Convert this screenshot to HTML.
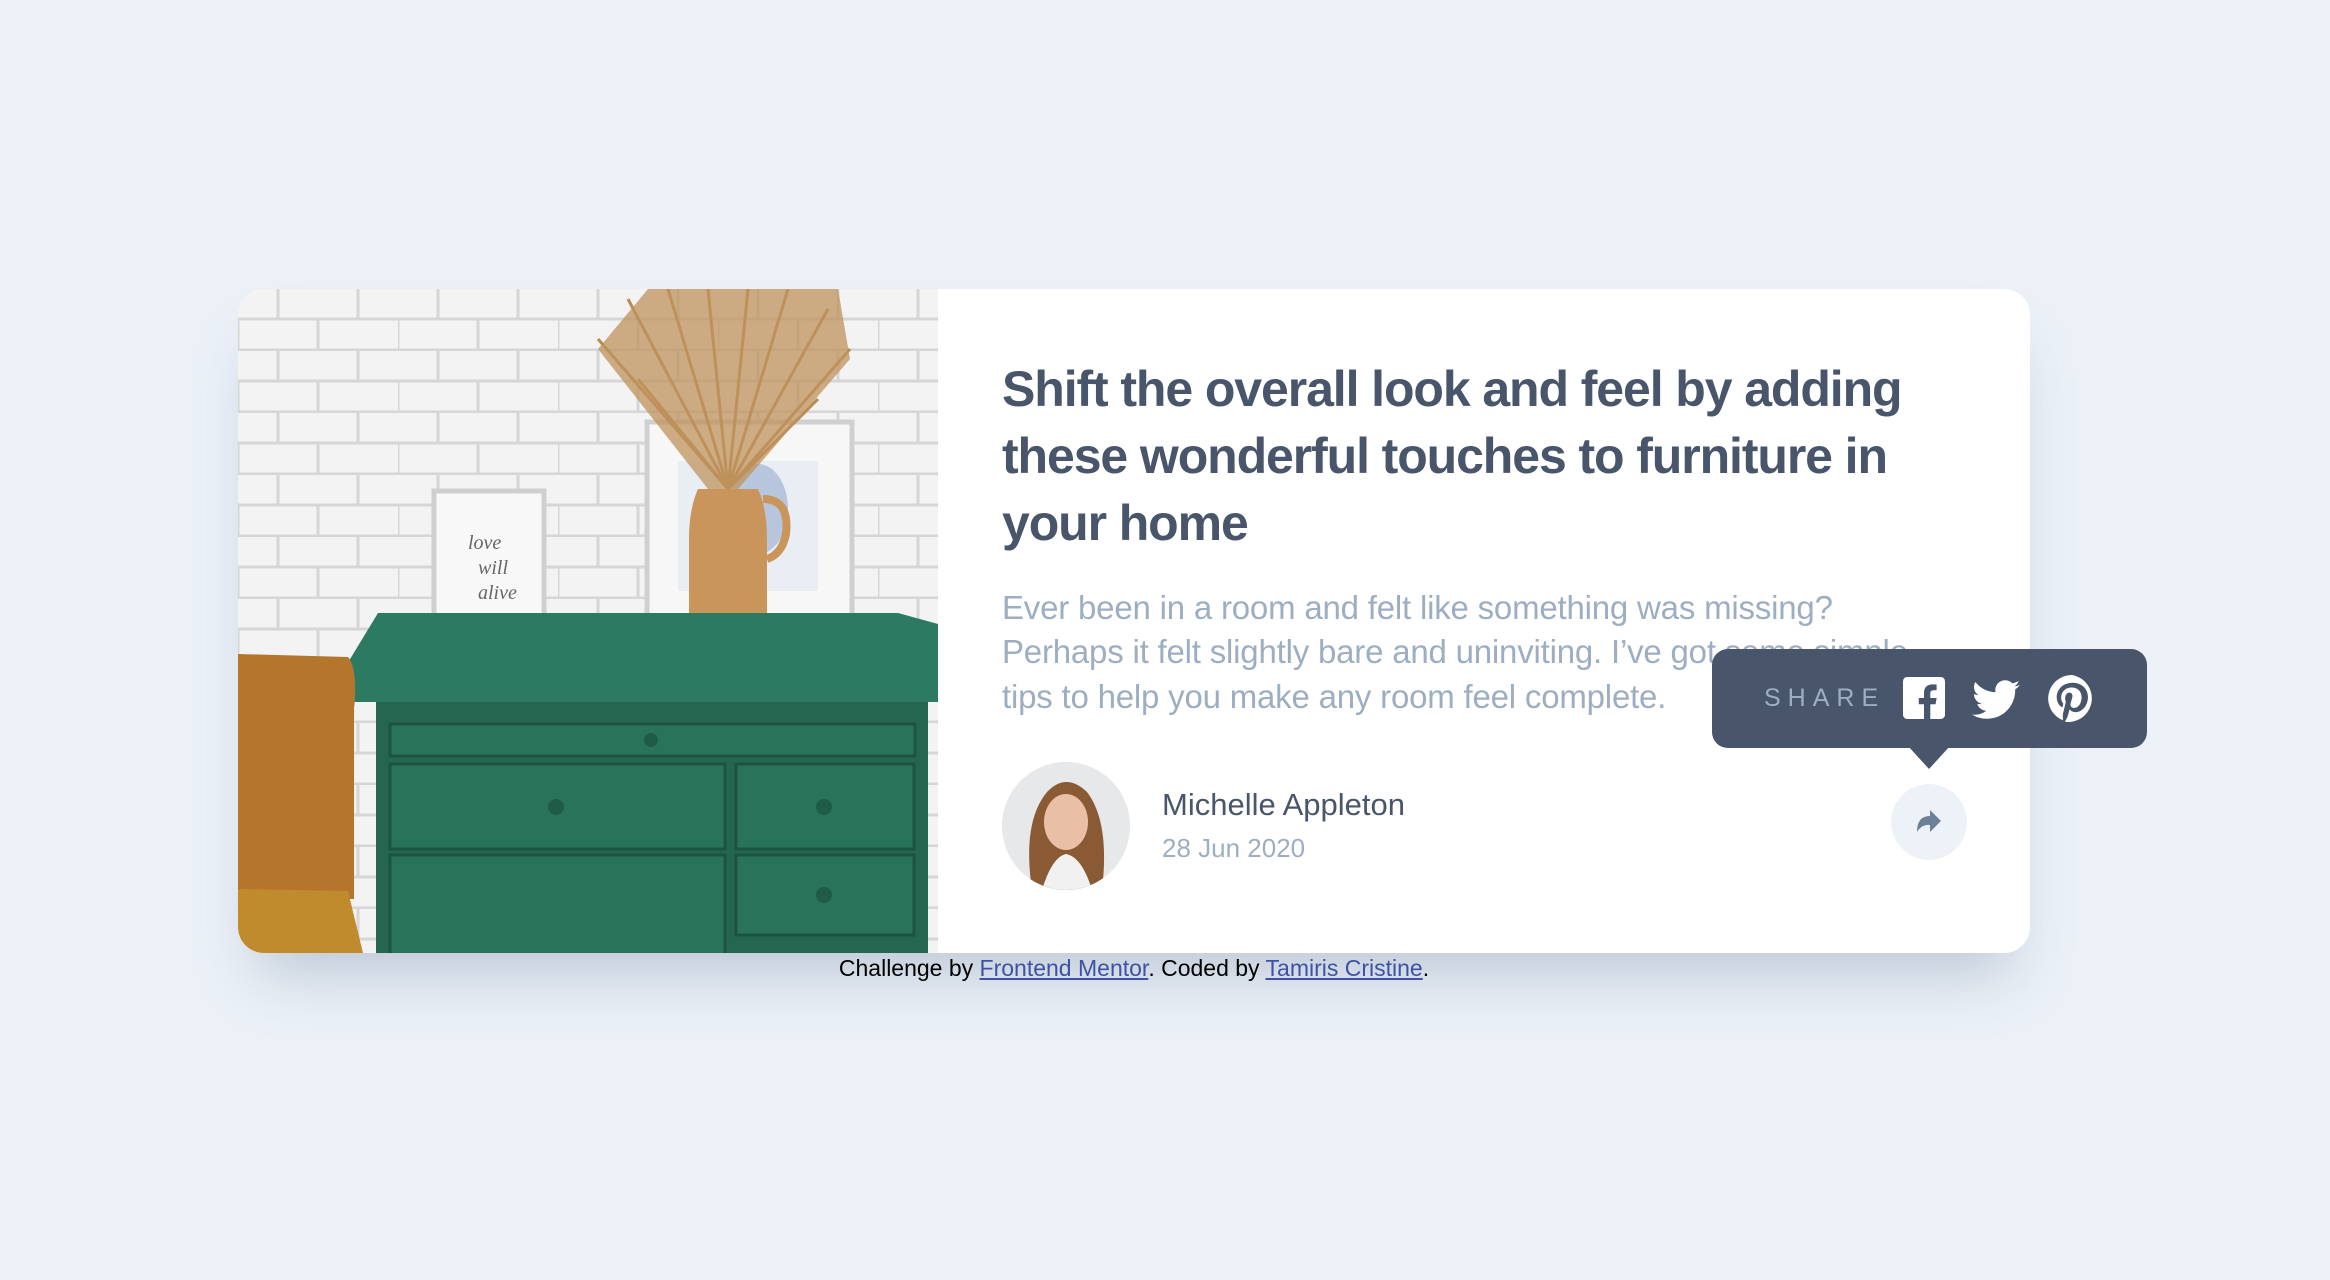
<!DOCTYPE html>
<html><head><meta charset="utf-8"><style>
*{margin:0;padding:0;box-sizing:border-box}
html,body{width:2330px;height:1280px;background:#ecf1f8;font-family:"Liberation Sans",sans-serif;overflow:hidden;position:relative}
.card{position:absolute;left:238px;top:289px;width:1792px;height:664px;background:#fff;border-radius:26px;overflow:hidden;box-shadow:0 40px 60px -20px rgba(100,120,150,.35)}
.img{position:absolute;left:0;top:0;width:700px;height:664px}
.t{position:absolute;left:1002px;color:#48556a;font-weight:bold;font-size:50px;letter-spacing:-1.1px;white-space:nowrap}
.d{position:absolute;left:1002px;color:#9daec2;font-size:33px;letter-spacing:-0.2px;white-space:nowrap}
.av{position:absolute;left:1002px;top:762px;width:128px;height:128px;border-radius:50%;overflow:hidden;background:#e4e6e8}
.name{position:absolute;left:1162px;top:787px;font-size:31px;color:#48556a;white-space:nowrap}
.date{position:absolute;left:1162px;top:833px;font-size:26px;color:#9daec2;white-space:nowrap}
.btn{position:absolute;left:1891px;top:784px;width:76px;height:76px;border-radius:50%;background:#ecf2f8}
.tip{position:absolute;left:1712px;top:649px;width:435px;height:99px;background:#48556a;border-radius:16px}
.ptr{position:absolute;left:1908px;top:746px;width:0;height:0;border-left:21px solid transparent;border-right:21px solid transparent;border-top:23px solid #48556a}
.share{position:absolute;left:1764px;top:684px;font-size:25px;letter-spacing:7px;color:#9daec2}
.foot{position:absolute;left:0;width:2268px;text-align:center;top:955px;font-size:23px;color:#000}
.foot a{color:#3e52a3;text-decoration:underline}
</style></head><body>
<div class="card">
<svg class="img" viewBox="0 0 700 664" preserveAspectRatio="none">
<defs><pattern id="br" width="160" height="62" patternUnits="userSpaceOnUse">
<rect width="160" height="62" fill="#f3f3f3"/>
<path d="M0 30H160M0 61H160M40 0V30M120 0V30M0 30V62M80 30V62" stroke="#d6d6d6" stroke-width="3"/>
</pattern></defs>
<rect width="700" height="664" fill="url(#br)"/>
<rect x="409" y="133" width="205" height="200" fill="#f7f7f7" stroke="#d0d0d0" stroke-width="5"/>
<rect x="440" y="172" width="140" height="130" fill="#e9eef5"/>
<ellipse cx="520" cy="220" rx="30" ry="45" fill="#b7c6dc"/>
<rect x="196" y="202" width="110" height="136" fill="#f8f8f8" stroke="#cfcfcf" stroke-width="5"/>
<text x="230" y="260" font-family="Liberation Serif" font-style="italic" font-size="20" fill="#666">love</text>
<text x="240" y="285" font-family="Liberation Serif" font-style="italic" font-size="20" fill="#666">will</text>
<text x="240" y="310" font-family="Liberation Serif" font-style="italic" font-size="20" fill="#666">alive</text>
<g stroke="#b98a52" stroke-width="3" fill="none">
<path d="M490 200L360 50M490 200L390 10M490 200L430 0M490 200L470 0M490 200L510 0M490 200L550 0M490 200L590 20M490 200L612 60M490 200L400 90M490 200L580 110"/>
</g>
<path d="M410 0L600 0L612 70L500 200L470 200L360 60Z" fill="#bf935c" opacity=".75"/>
<path d="M460 200Q451 220 451 250L451 372L529 372L529 250Q529 220 520 200Z" fill="#c9955a"/>
<path d="M525 210Q552 210 548 245Q544 265 529 270" stroke="#c9955a" stroke-width="8" fill="none"/>
<path d="M140 324L660 324L700 335L700 413L100 413L100 390Z" fill="#2c7a62"/>
<rect x="138" y="413" width="552" height="251" fill="#24664f"/>
<g fill="#2a735b" stroke="#1c5441" stroke-width="3">
<rect x="152" y="435" width="525" height="32"/>
<rect x="152" y="475" width="335" height="85"/>
<rect x="498" y="475" width="178" height="85"/>
<rect x="152" y="566" width="335" height="100"/>
<rect x="498" y="566" width="178" height="80"/>
</g>
<g fill="#1f5c47"><circle cx="413" cy="451" r="7"/><circle cx="318" cy="518" r="8"/><circle cx="586" cy="518" r="8"/><circle cx="586" cy="606" r="8"/></g>
<path d="M0 365L110 368Q120 380 116 420L116 610L0 610Z" fill="#b4752c"/>
<path d="M0 600L110 602L125 664L0 664Z" fill="#c08b2d"/>
</svg>
</div>
<div class="t" style="top:360px">Shift the overall look and feel by adding</div>
<div class="t" style="top:427px">these wonderful touches to furniture in</div>
<div class="t" style="top:494px">your home</div>
<div class="d" style="top:589px">Ever been in a room and felt like something was missing?</div>
<div class="d" style="top:633px">Perhaps it felt slightly bare and uninviting. I’ve got some simple</div>
<div class="d" style="top:678px">tips to help you make any room feel complete.</div>
<div class="av"><svg width="128" height="128" viewBox="0 0 128 128">
<rect width="128" height="128" fill="#e6e8ea"/>
<path d="M30 128Q20 60 45 30Q64 10 85 30Q108 60 100 128Z" fill="#8a5a35"/>
<ellipse cx="64" cy="60" rx="22" ry="28" fill="#e9c0a6"/>
<path d="M40 128Q50 95 64 92Q80 95 90 128Z" fill="#f1f1f1"/>
</svg></div>
<div class="name">Michelle Appleton</div>
<div class="date">28 Jun 2020</div>
<div class="btn"><svg width="76" height="76" viewBox="0 0 76 76"><path d="M26 48Q26 32 39 32L39 26L50 37L39 48L39 41Q31 40 26 48Z" fill="#6e8098"/></svg></div>
<div class="tip"></div><div class="ptr"></div>
<div class="share">SHARE</div>
<svg style="position:absolute;left:1903px;top:677px" width="42" height="42" viewBox="0 0 20 20"><path fill="#fff" d="M18 0H2A2 2 0 0 0 0 2v16a2 2 0 0 0 2 2h8v-7H7.5v-3H10V7.5C10 5 11.5 3.5 14 3.5c1 0 2 .1 2 .1V6.3h-1.4c-1.2 0-1.6.8-1.6 1.6V10h3l-.5 3H13v7h5a2 2 0 0 0 2-2V2a2 2 0 0 0-2-2z"/></svg>
<svg style="position:absolute;left:1972px;top:680px" width="48" height="39" viewBox="0 0 20 16"><path fill="#fff" d="M20 1.9a8 8 0 0 1-2.4.7A4.1 4.1 0 0 0 19.4.3a8 8 0 0 1-2.6 1A4.1 4.1 0 0 0 9.8 5 11.6 11.6 0 0 1 1.4.7a4.1 4.1 0 0 0 1.3 5.5A4 4 0 0 1 .8 5.7a4.1 4.1 0 0 0 3.3 4 4 4 0 0 1-1.9.1 4.1 4.1 0 0 0 3.8 2.9A8.2 8.2 0 0 1 0 14.3 11.6 11.6 0 0 0 6.3 16c7.5 0 11.7-6.3 11.7-11.7v-.5A8.3 8.3 0 0 0 20 1.9z"/></svg>
<svg style="position:absolute;left:2048px;top:675px" width="47" height="47" viewBox="0 0 20 20"><path fill="#fff" d="M10 0a10 10 0 0 0-3.6 19.3c-.1-.8-.2-2 0-2.9l1.2-5s-.3-.6-.3-1.5c0-1.4.8-2.4 1.8-2.4.9 0 1.3.6 1.3 1.4 0 .8-.5 2.1-.8 3.3-.2 1 .5 1.8 1.5 1.8 1.8 0 3.2-1.9 3.2-4.6 0-2.4-1.7-4.1-4.2-4.1-2.9 0-4.5 2.1-4.5 4.4 0 .9.3 1.8.8 2.3.1.1.1.2.1.3l-.3 1.2c0 .2-.2.2-.4.1-1.3-.6-2.1-2.5-2.1-4 0-3.3 2.4-6.3 6.9-6.3 3.6 0 6.4 2.6 6.4 6 0 3.6-2.3 6.5-5.4 6.5-1.1 0-2.1-.6-2.4-1.2l-.7 2.5c-.2.9-.9 2.1-1.3 2.8A10 10 0 1 0 10 0z"/></svg>
<div class="foot">Challenge by <a>Frontend Mentor</a>. Coded by <a>Tamiris Cristine</a>.</div>
</body></html>
